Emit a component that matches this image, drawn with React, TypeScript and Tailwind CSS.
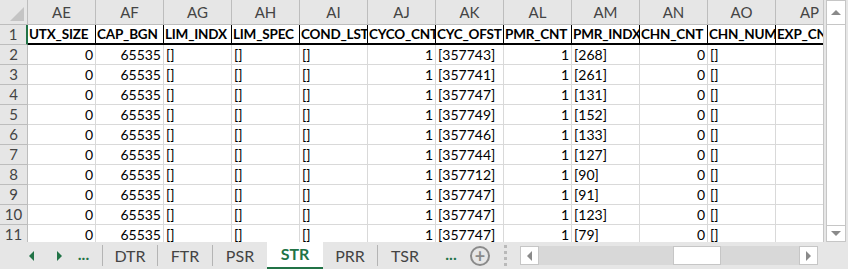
const cols = ['AE', 'AF', 'AG', 'AH', 'AI', 'AJ', 'AK', 'AL', 'AM', 'AN', 'AO', 'AP'];
const titles = ['UTX_SIZE', 'CAP_BGN', 'LIM_INDX', 'LIM_SPEC', 'COND_LST', 'CYCO_CNT', 'CYC_OFST', 'PMR_CNT', 'PMR_INDX', 'CHN_CNT', 'CHN_NUM', 'EXP_CNT'];
// which columns are numbers (right aligned)
const numeric = [true, true, false, false, false, true, false, true, false, true, false, false];

const data: [string, string][] = [
  ['[357743]', '[268]'],
  ['[357741]', '[261]'],
  ['[357747]', '[131]'],
  ['[357749]', '[152]'],
  ['[357746]', '[133]'],
  ['[357744]', '[127]'],
  ['[357712]', '[90]'],
  ['[357747]', '[91]'],
  ['[357747]', '[123]'],
  ['[357747]', '[79]'],
];

const font = { fontFamily: 'Lato, "Liberation Sans", sans-serif' };

function Cell({ v, right }: { v: string; right: boolean }) {
  return (
    <div
      className={`h-[20px] border-r border-b border-[#d9d9d9] overflow-hidden whitespace-nowrap px-[2px] text-[14px] leading-[20px] text-black ${right ? 'text-right' : 'text-left'}`}
    >
      {v}
    </div>
  );
}

function Tab({ name, active }: { name: string; active?: boolean }) {
  if (active) {
    return (
      <div className="h-[27px] w-[56px] bg-white border-b-2 border-[#217346] flex items-center justify-center text-[16px] font-bold text-[#217346] -mt-px">
        {name}
      </div>
    );
  }
  return (
    <div className="h-[27px] w-[54px] flex items-center justify-center text-[16px] text-[#444]">{name}</div>
  );
}

function Sep() {
  return <div className="w-px h-[21px] bg-[#b4b4b4]" />;
}

export default function App() {
  return (
    <div className="w-[848px] h-[269px] bg-[#e6e6e6] flex flex-col overflow-hidden" style={font}>
      <div className="flex h-[242px]">
        {/* sheet grid */}
        <div className="w-[824px] h-[242px] overflow-hidden bg-white border-r border-[#c6c6c6]">
          <div className="grid grid-cols-[28px_repeat(12,68px)] w-max">
            {/* corner */}
            <div className="h-[25px] bg-[#e6e6e6] border-r border-b border-[#bdbdbd] relative">
              <div className="absolute right-[3px] bottom-[3px] w-0 h-0 border-l-[14px] border-l-transparent border-b-[14px] border-b-[#c4c4c4]" />
            </div>
            {cols.map((c) => (
              <div
                key={c}
                className="h-[25px] bg-[#e6e6e6] border-r border-b border-[#bdbdbd] flex items-center justify-center text-[15px] text-[#444]"
              >
                {c}
              </div>
            ))}

            {/* row 1 */}
            <div className="h-[20px] bg-[#e6e6e6] border-r-2 border-r-[#217346] border-b border-[#bdbdbd] flex items-center justify-center text-[15px] text-[#444]">
              1
            </div>
            {titles.map((t) => (
              <div
                key={t}
                className="h-[20px] border-r border-b-2 border-black overflow-hidden whitespace-nowrap pl-[1px] text-[13.5px] tracking-[-0.2px] leading-[18px] font-bold text-black"
              >
                {t}
              </div>
            ))}

            {data.map(([ofst, indx], i) => {
              const vals = ['0', '65535', '[]', '[]', '[]', '1', ofst, '1', indx, '0', '[]', ''];
              return [
                <div
                  key={`h${i}`}
                  className="h-[20px] bg-[#e6e6e6] border-r border-b border-[#bdbdbd] flex items-center justify-center text-[15px] text-[#444]"
                >
                  {i + 2}
                </div>,
                ...vals.map((v, j) => <Cell key={`${i}-${j}`} v={v} right={numeric[j]} />),
              ];
            })}
          </div>
        </div>

        {/* vertical scrollbar */}
        <div className="w-[24px] h-[242px] flex flex-col items-center pt-0 pl-[2px] pr-[2px]">
          <div className="w-[20px] h-[25px] bg-white border border-[#c6c6c6] flex items-center justify-center">
            <div className="w-0 h-0 border-l-[5px] border-r-[5px] border-b-[5px] border-l-transparent border-r-transparent border-b-[#8a8a8a]" />
          </div>
          <div className="w-[20px] flex-1 bg-white border-x border-[#c6c6c6]" />
          <div className="w-[20px] h-[17px] bg-white border border-[#c6c6c6] flex items-center justify-center">
            <div className="w-0 h-0 border-l-[5px] border-r-[5px] border-t-[5px] border-l-transparent border-r-transparent border-t-[#8a8a8a]" />
          </div>
        </div>
      </div>

      {/* sheet tabs bar */}
      <div className="h-[27px] flex items-center bg-[#e6e6e6]">
        <div className="w-[25px]" />
        <div className="w-[12px] flex justify-center">
          <div className="w-0 h-0 border-t-[5px] border-b-[5px] border-r-[5px] border-t-transparent border-b-transparent border-r-[#217346]" />
        </div>
        <div className="w-[16px]" />
        <div className="w-[12px] flex justify-center">
          <div className="w-0 h-0 border-t-[5px] border-b-[5px] border-l-[5px] border-t-transparent border-b-transparent border-l-[#217346]" />
        </div>
        <div className="w-[37px] text-center text-[16px] font-bold text-[#217346] leading-none -mt-[4px]">...</div>
        <Sep />
        <Tab name="DTR" />
        <Sep />
        <Tab name="FTR" />
        <Sep />
        <Tab name="PSR" />
        <Tab name="STR" active />
        <Tab name="PRR" />
        <Sep />
        <Tab name="TSR" />
        <div className="w-[38px] text-center text-[16px] font-bold text-[#217346] leading-none -mt-[4px]">...</div>
        <div className="w-[20px] h-[20px] rounded-full border-2 border-[#8a8a8a] flex items-center justify-center text-[#8a8a8a] text-[18px] leading-none font-bold">
          +
        </div>
        <div className="w-[30px] flex flex-col items-center gap-[3px]">
          <div className="w-[3px] h-[3px] bg-[#b9b9b9]" />
          <div className="w-[3px] h-[3px] bg-[#b9b9b9]" />
          <div className="w-[3px] h-[3px] bg-[#b9b9b9]" />
          <div className="w-[3px] h-[3px] bg-[#b9b9b9]" />
        </div>
        {/* horizontal scrollbar */}
        <div className="w-[298px] h-[19px] flex bg-[#d8d8d8]">
          <div className="w-[19px] h-[19px] bg-white border border-[#c6c6c6] flex items-center justify-center">
            <div className="w-0 h-0 border-t-[5px] border-b-[5px] border-r-[5px] border-t-transparent border-b-transparent border-r-[#8a8a8a]" />
          </div>
          <div className="w-[134px]" />
          <div className="w-[48px] h-[19px] bg-white border border-[#c6c6c6]" />
          <div className="flex-1" />
          <div className="w-[19px] h-[19px] bg-white border border-[#c6c6c6] flex items-center justify-center">
            <div className="w-0 h-0 border-t-[5px] border-b-[5px] border-l-[5px] border-t-transparent border-b-transparent border-l-[#8a8a8a]" />
          </div>
        </div>
      </div>
    </div>
  );
}
